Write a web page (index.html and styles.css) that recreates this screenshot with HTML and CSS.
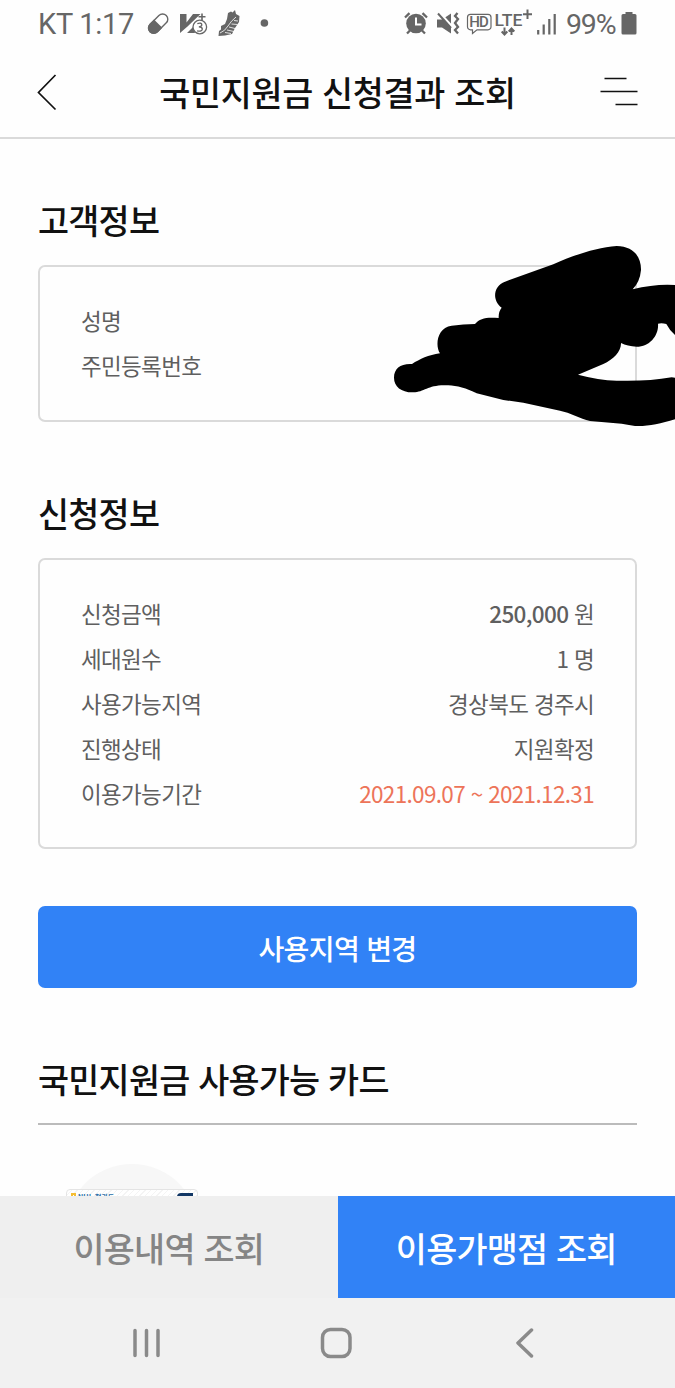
FILE: index.html
```html
<!DOCTYPE html>
<html lang="ko">
<head>
    <meta charset="UTF-8">
    <meta name="viewport" content="width=device-width, initial-scale=1.0">
    <title>국민지원금 신청결과 조회</title>
    <link rel="stylesheet" href="styles.css">
</head>
<body>
    <div class="status-bar">
        <span class="clock">KT 1:17</span>
        <svg class="status-left" width="130" height="46" viewBox="0 0 130 46">
            <!-- pill -->
            <g transform="rotate(-45 18 22.500)">
                <rect x="6.500" y="17.500" width="23" height="10.400" rx="5.200" fill="#fff" stroke="#666" stroke-width="1.400"/>
                <path d="M18 16.800h-6.200a5.900 5.900 0 0 0 0 11.800H18z" fill="#666"/>
            </g>
            <!-- V3 -->
            <path d="M40 13h6.500v8.500L53 13h7.500L47.500 25.500 40 32zM47 32l6-6 2 6z" fill="#666"/>
            <path d="M62 12.500v7M58.500 15.800h7" stroke="#666" stroke-width="1.600"/>
            <circle cx="59.800" cy="26" r="6.800" fill="#fff" stroke="#666" stroke-width="1.300"/>
            <path d="M57.300 22.600q4.500-1.300 4.500 1.200 0 2-3 2 3.500 0 3.500 2.200 0 3-5.200 1.800" fill="none" stroke="#666" stroke-width="1.300"/>
            <!-- shoe -->
            <path d="M78.500 35l.5-5 2-1.500V25l4-2 2-5 1-6 3-1.500 1.500 1L95 9l1 4 3.500 2-.5 6-4 6-3 6-7 1.500z" fill="#666"/>
            <path d="M80 32q5-2 8-7t8-9M87 29l7 1.500M85 31.500l6 1M89 26l6 1.500M91.500 23l6 .5M94 19.500l4 .5" fill="none" stroke="#fff" stroke-width=".8"/>
            <circle cx="124.400" cy="22" r="3.800" fill="#666"/>
        </svg>
        <svg class="status-right" width="160" height="46" viewBox="0 0 160 46">
            <!-- alarm -->
            <path d="M9 16.500l4.500-4.300M26.500 12.200l4.500 4.300M14 29.500l-3 3M26 29.500l3 3" fill="none" stroke="#666" stroke-width="2.300"/>
            <circle cx="20" cy="22.500" r="9.800" fill="#666"/>
            <path d="M20 16.500v7h5.500" fill="none" stroke="#fff" stroke-width="2"/>
            <!-- muted speaker -->
            <path d="M41 18.500h5l9-6v20l-9-6h-5z" fill="#666"/>
            <path d="M43 11l13 14.500" stroke="#fff" stroke-width="2.600"/>
            <path d="M42 12.500l13 14.500" stroke="#666" stroke-width="2"/>
            <path d="M61.500 12l-2.500 3 3 3-3 4 3 4-3 3 3 3.500" fill="none" stroke="#666" stroke-width="2.300"/>
            <!-- HD badge -->
            <path d="M74.500 13.300h17.500a3 3 0 0 1 3 3v9.500a3 3 0 0 1-3 3H81l-4.500 3.700v-3.700h-2a3 3 0 0 1-3-3v-9.500a3 3 0 0 1 3-3z" fill="none" stroke="#666" stroke-width="1.200"/>
            <text class="hd" x="73.300" y="26.300" textLength="19.500">HD</text>
            <!-- LTE+ -->
            <text class="lte" x="98.500" y="24.500" textLength="28" lengthAdjust="spacingAndGlyphs">LTE</text>
            <path d="M131.500 8.500v9.500M127 13.200h9" fill="none" stroke="#666" stroke-width="2"/>
            <path d="M108.500 26.500v6.500M105.700 30.500l2.800 3 2.800-3M115.500 34v-6M112.700 30.500l2.800-3 2.800 3" fill="none" stroke="#666" stroke-width="2"/>
            <!-- signal -->
            <path d="M142.200 33.500v-4.500M147.700 33.500V23.500M153.300 33.500V18M158.700 33.500V13" stroke="#666" stroke-width="2.200"/>
        </svg>
        <span class="battery-text">99%</span>
        <svg class="battery" width="16" height="23" viewBox="0 0 16 23">
            <path d="M4.500 0h7v2H14a1.500 1.500 0 0 1 1.500 1.500V21a1.500 1.500 0 0 1-1.500 1.500H2A1.500 1.500 0 0 1 .5 21V3.500A1.500 1.500 0 0 1 2 2h2.500z" fill="#666"/>
        </svg>
    </div>

    <header class="header">
        <svg width="38" height="38" viewBox="0 0 38 38">
            <path d="M18.500 2L1.500 19.500l17 17" fill="none" stroke="#111" stroke-width="1.700"/>
        </svg>
        <h1>국민지원금 신청결과 조회</h1>
        <svg width="38" height="30" viewBox="0 0 38 30">
            <path d="M4.500 1.500h22M.5 14.500h37M15.500 27.500h22" fill="none" stroke="#111" stroke-width="1.700"/>
        </svg>
    </header>

    <main>
        <section class="customer">
            <h2>고객정보</h2>
            <div class="info-box">
                <dl>
                    <div class="row"><dt>성명</dt><dd></dd></div>
                    <div class="row"><dt>주민등록번호</dt><dd></dd></div>
                </dl>
                <svg class="scribble" width="295" height="210" viewBox="0 0 885 630">
                    <path d="M42 443C42 415 62 400 96 402C120 387 145 375 180 370C165 348 170 293 215 287Q250 282 285 282C300 264 320 261 356 264Q355 245 365 233C335 210 340 168 375 155L520 103C580 75 650 53 710 48C760 49 784 80 783 120Q780 155 758 178Q825 161 885 165V315Q868 300 859 282Q845 278 834 281C837 315 810 350 770 350Q742 349 723 339C724 365 700 388 670 402L594 434Q655 450 710 452Q800 455 875 442L885 443V568C840 582 800 590 765 588Q740 584 725 581L630 573C600 565 570 548 540 542L430 518L370 510L290 490C260 475 230 467 205 466C145 462 135 486 100 487C65 488 42 470 42 443Z"/>
                </svg>
            </div>
        </section>

        <section class="application">
            <h2>신청정보</h2>
            <div class="info-box">
                <dl>
                    <div class="row"><dt>신청금액</dt><dd><strong>250,000</strong> 원</dd></div>
                    <div class="row"><dt>세대원수</dt><dd>1 명</dd></div>
                    <div class="row"><dt>사용가능지역</dt><dd>경상북도 경주시</dd></div>
                    <div class="row"><dt>진행상태</dt><dd>지원확정</dd></div>
                    <div class="row"><dt>이용가능기간</dt><dd class="period">2021.09.07 ~ 2021.12.31</dd></div>
                </dl>
            </div>
            <button class="change-button">사용지역 변경</button>
        </section>

        <section class="cards">
            <h2>국민지원금 사용가능 카드</h2>
            <div class="card-image">
                <div class="card">
                    <span class="card-mark"></span>
                    <span class="card-brand">NH농협카드</span>
                    <span class="card-badge"></span>
                </div>
            </div>
        </section>
    </main>

    <div class="tabs">
        <button class="tab">이용내역 조회</button>
        <button class="tab active">이용가맹점 조회</button>
    </div>

    <nav class="system-nav">
        <svg width="32" height="30" viewBox="0 0 32 30">
            <path d="M4 2.500v25M15.500 2.500v25M27 2.500v25"/>
        </svg>
        <svg width="32" height="32" viewBox="0 0 32 32">
            <rect x="2.500" y="2.500" width="27.500" height="27" rx="8"/>
        </svg>
        <svg width="20" height="30" viewBox="0 0 20 30">
            <path d="M16.500 2L3 15l13.500 13"/>
        </svg>
    </nav>
</body>
</html>
```
FILE: styles.css
```css
:root {
    --blue: #3182f6;
    --text-primary: #111;
    --text-secondary: #5f5f5f;
    --status: #666;
    --line: #dadada;
}

* {
    margin: 0;
    padding: 0;
    box-sizing: border-box;
}

body {
    font-family: 'Noto Sans CJK KR', sans-serif;
    background: #fefefe;
    color: var(--text-primary);
    height: 1388px;
    display: flex;
    flex-direction: column;
    overflow: hidden;
}

svg {
    display: block;
    flex-shrink: 0;
}

button {
    border: none;
    font-family: inherit;
}

.status-bar {
    height: 47px;
    padding: 0 38px;
    display: flex;
    align-items: center;
    font-family: Roboto, sans-serif;
    font-size: 29px;
    font-weight: 400;
    color: var(--status);
}

.clock {
    width: 102px;
    padding-top: 1px;
    letter-spacing: -0.3px;
    white-space: nowrap;
}

.status-right {
    margin-left: auto;
    margin-right: 10px;
}

.hd {
    font: 500 15px Roboto, sans-serif;
    fill: var(--status);
}

.lte {
    font: 500 17px Roboto, sans-serif;
    fill: var(--status);
}

.battery-text {
    width: 55px;
    padding-top: 1px;
    font-size: 28.5px;
    letter-spacing: -1.2px;
}

.header {
    height: 92px;
    padding: 0 37px;
    display: flex;
    align-items: center;
    justify-content: space-between;
    border-bottom: 2px solid var(--line);
}

h1,
h2 {
    font-size: 33.75px;
    font-weight: 500;
    line-height: 50px;
    letter-spacing: -0.3px;
}

h2 {
    letter-spacing: -0.75px;
}

main {
    flex: 1;
    min-height: 0;
    padding: 0 38px;
    overflow: hidden;
}

.customer {
    padding-top: 56px;
}

.info-box {
    position: relative;
    margin-top: 20px;
    padding: 31px 41px;
    border: 2px solid var(--line);
    border-radius: 7px;
}

.customer .info-box {
    padding-bottom: 32px;
}

.row {
    display: flex;
    justify-content: space-between;
    font-size: 22.5px;
    line-height: 45px;
    letter-spacing: -0.66px;
    color: var(--text-secondary);
}

.row strong {
    font-weight: 500;
}

.row .period {
    color: #ed7459;
}

/* covers the personal values and runs past the box */
.scribble {
    position: absolute;
    top: -37px;
    left: 340px;
}

.application {
    padding-top: 66px;
}

.change-button {
    width: 100%;
    height: 82px;
    margin-top: 57px;
    border-radius: 7px;
    background: var(--blue);
    color: #fff;
    font-size: 28.1px;
    font-weight: 500;
    letter-spacing: -0.7px;
}

.cards {
    padding-top: 66px;
}

.cards h2 {
    padding-bottom: 19px;
    border-bottom: 2px solid #bbb;
    box-sizing: content-box;
}

.card-image {
    width: 132px;
    height: 132px;
    margin: 39px 0 0 28px;
    padding-top: 25px;
    border-radius: 50%;
    background: #f7f7f7;
}

.card {
    height: 83px;
    padding: 3px 4px;
    display: flex;
    align-items: flex-start;
    border: 1px solid #e4e4e4;
    border-radius: 4px;
    background: repeating-linear-gradient(135deg, #fff 0 3px, #f4f4f4 3px 4px);
}

.card-mark {
    width: 5px;
    height: 7px;
    border: 2px solid #f5bd32;
}

.card-brand {
    margin-left: 2px;
    font-size: 7px;
    font-weight: 700;
    line-height: 8px;
    color: #286da8;
}

.card-badge {
    width: 16px;
    height: 12px;
    margin-left: auto;
    border-radius: 4px 0 0 0;
    background: #123765;
}

.tabs {
    display: flex;
    height: 102px;
    flex-shrink: 0;
}

.tab {
    flex: 1;
    background: #efefef;
    color: #858585;
    font-size: 33.75px;
    font-weight: 500;
    letter-spacing: -0.75px;
}

.tab.active {
    background: var(--blue);
    color: #fff;
}

.system-nav {
    height: 90px;
    flex-shrink: 0;
    padding: 0 140px 0 131px;
    display: flex;
    align-items: center;
    gap: 157px;
    background: #f1f1f1;
}

.system-nav svg:last-child {
    margin-left: auto;
}

.system-nav svg {
    fill: none;
    stroke: #8a8a8a;
    stroke-width: 3.5;
    stroke-linecap: round;
    stroke-linejoin: round;
}
```
